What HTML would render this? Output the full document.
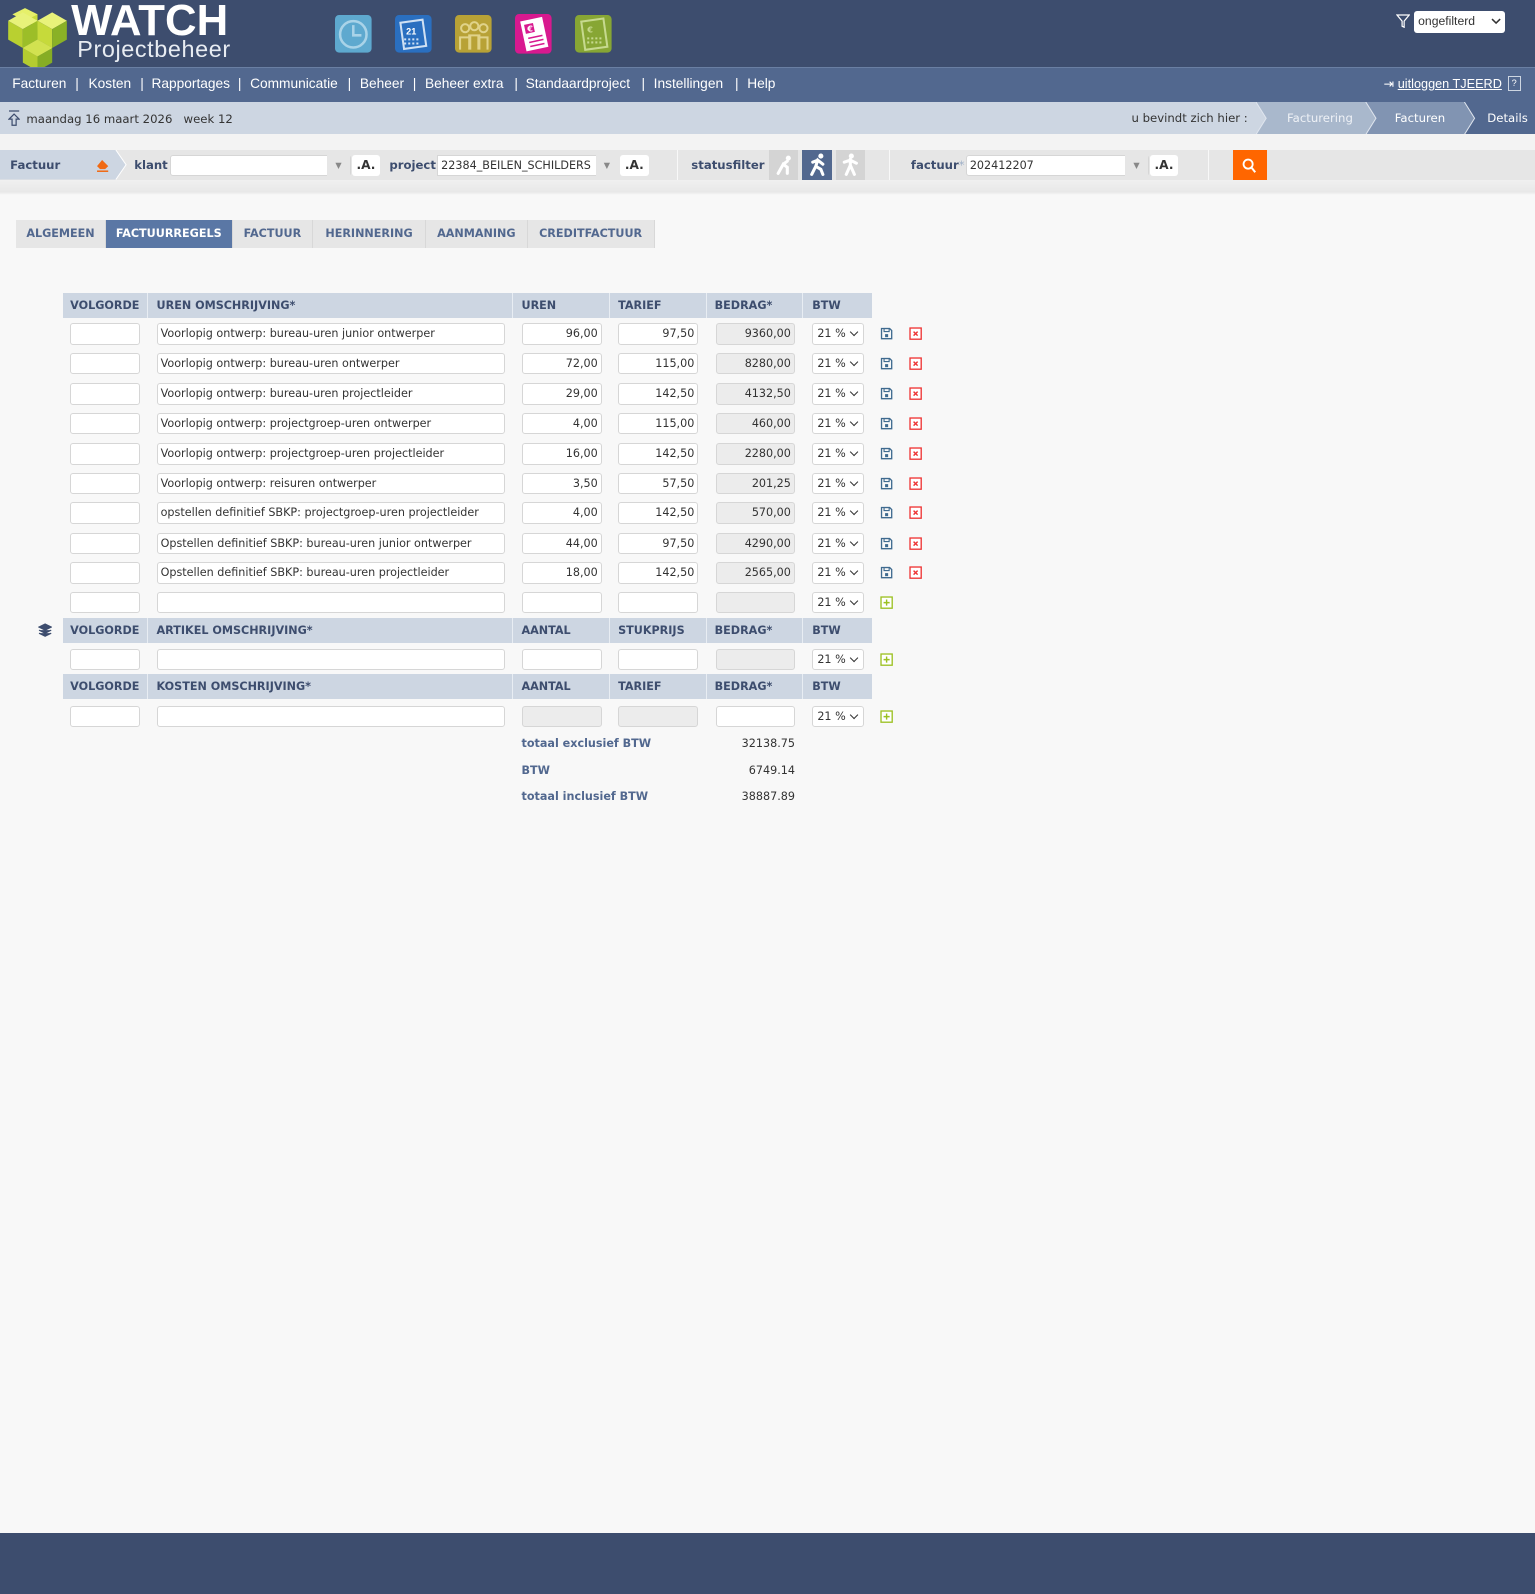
<!DOCTYPE html>
<html><head><meta charset="utf-8">
<style>
html,body{margin:0;padding:0}
body{zoom:1.0166;width:1510px;height:1568px;background:#f8f8f8;font-family:"DejaVu Sans","Liberation Sans",sans-serif;font-size:11px;color:#333;position:relative;overflow:hidden}
.a{position:absolute}
#top{left:0;top:0;width:1510px;height:66px;background:#3d4d6e}
#nav{left:0;top:66px;width:1510px;height:34px;background:#52688f;border-top:1px solid #6a7fa3;box-sizing:border-box}
#nav span{position:absolute;top:8px;color:#fff;font-family:"Liberation Sans",sans-serif;font-size:13.5px}
#bc{left:0;top:100px;width:1510px;height:32px;background:#cdd6e2}
#fb{left:0;top:148px;width:1510px;height:29px;background:#e6e6e6}
.inp{position:absolute;background:#fff;border:1px solid #d6d6d6;border-radius:3px;box-sizing:border-box;height:21px;font-size:11px;line-height:19px;padding:0 3px;white-space:nowrap;overflow:hidden}
.g{background:#ececec}
.r{text-align:right}
.th{position:absolute;height:25px;background:#cdd6e2;font-weight:bold;color:#3d4d6e;font-size:11px;line-height:25px}
.th span{position:absolute;top:0}
.th i{position:absolute;top:0;width:1px;height:25px;background:#e8edf3}
.sel{position:absolute;width:51px;height:21px;background:#fff;border:1px solid #d6d6d6;border-radius:3px;box-sizing:border-box;font-size:11px;line-height:19px;padding-left:4px}
.sel:after{content:"";position:absolute;right:6px;top:5px;width:5px;height:5px;border-right:1.5px solid #333;border-bottom:1.5px solid #333;transform:rotate(45deg)}
.tab{position:absolute;top:216px;height:28px;line-height:28px;background:#e6e6e6;color:#52688f;font-weight:bold;font-size:11px;text-align:center;border-right:1px solid #d8d8d8;box-sizing:border-box}
.lbl{position:absolute;font-weight:bold;color:#3d4d6e;font-size:11.5px}
.tot{position:absolute;font-weight:bold;color:#52688f;font-size:11px}
</style></head><body>
<div id="top" class="a"></div>
<svg class="a" style="left:4px;top:6px" width="68" height="64" viewBox="0 0 66 62">
<polygon points="20,2 32,8 32,20 20,14" fill="#c8dc3c"/><polygon points="20,2 8,8 20,14 32,8" fill="#e6f06a"/>
<polygon points="4,14 18,22 18,40 4,32" fill="#b9d030"/><polygon points="4,14 18,6 32,14 18,22" fill="#e8f27a"/>
<polygon points="18,22 32,14 32,32 18,40" fill="#9cbe28"/>
<polygon points="32,14 46,6 60,14 46,22" fill="#e8f27a"/><polygon points="32,14 46,22 46,40 32,32" fill="#c6da3a"/><polygon points="46,22 60,14 60,32 46,40" fill="#8ab126"/>
<polygon points="18,40 32,32 46,40 32,48" fill="#dde86a"/><polygon points="18,40 32,48 32,62 18,54" fill="#b4cc30"/><polygon points="32,48 46,40 46,54 32,62" fill="#86ad24"/>
<polygon points="32,32 46,40 32,48 18,40" fill="#d2e250"/>
</svg>
<div class="a" style="left:70px;top:-4px;color:#fff;font-weight:bold;font-size:43px;font-family:'Liberation Sans',sans-serif">WATCH</div>
<div class="a" style="left:76px;top:35px;color:#e8ecf2;font-size:23px;letter-spacing:0.6px;font-family:'Liberation Sans',sans-serif">Projectbeheer</div>
<svg class="a" style="left:330px;top:15px" width="36" height="37"><rect width="36" height="37" rx="4" fill="#5ea9cf"/><circle cx="18" cy="19" r="13" fill="none" stroke="#a9d3e8" stroke-width="2.5"/><path d="M18 10v10h8" fill="none" stroke="#a9d3e8" stroke-width="2.5"/></svg>
<svg class="a" style="left:389px;top:15px" width="36" height="37"><rect width="36" height="37" rx="4" fill="#2a6fc0"/><rect x="7" y="6" width="22" height="26" fill="none" stroke="#cfe0f3" stroke-width="2" transform="rotate(-8 18 19)"/><text x="11" y="19" font-size="9" fill="#fff" font-family="Liberation Sans" font-weight="bold">21</text><path d="M9 24h16M9 28h16" stroke="#cfe0f3" stroke-width="2" stroke-dasharray="2 2"/></svg>
<svg class="a" style="left:448px;top:15px" width="36" height="37"><rect width="36" height="37" rx="4" fill="#b8a236"/><circle cx="10" cy="13" r="4" fill="none" stroke="#e0d38a" stroke-width="2"/><circle cx="19" cy="11" r="4" fill="none" stroke="#e0d38a" stroke-width="2"/><circle cx="28" cy="13" r="4" fill="none" stroke="#e0d38a" stroke-width="2"/><path d="M5 34v-12h10v12M14 34v-14h10v14M23 34v-12h9v12" fill="none" stroke="#e0d38a" stroke-width="2"/></svg>
<svg class="a" style="left:507px;top:14px" width="36" height="39"><rect width="36" height="39" rx="4" fill="#d8198f"/><rect x="8" y="5" width="22" height="30" fill="#fff" transform="rotate(-12 18 20)"/><rect x="11" y="9" width="9" height="9" fill="#d8198f" transform="rotate(-12 18 20)"/><text x="12" y="17" font-size="8" fill="#fff" font-weight="bold">€</text><path d="M13 24l14-3M14 28l14-3M15 32l14-3" stroke="#d8198f" stroke-width="1.5"/></svg>
<svg class="a" style="left:566px;top:15px" width="36" height="37"><rect width="36" height="37" rx="4" fill="#87a634"/><rect x="8" y="5" width="22" height="28" fill="none" stroke="#c6d98e" stroke-width="2" transform="rotate(-8 18 19)"/><text x="12" y="17" font-size="8" fill="#c6d98e" font-weight="bold">€</text><path d="M12 23h14M12 27h14" stroke="#c6d98e" stroke-width="2" stroke-dasharray="2 2"/></svg>
<svg class="a" style="left:1373px;top:14px" width="14" height="14"><path d="M1 1h12l-5 6v6l-2-1v-5z" fill="none" stroke="#fff" stroke-width="1.2"/></svg>
<div class="a" style="left:1391px;top:11px;width:89px;height:21px;background:#fff;border-radius:3px;font-size:12px;line-height:21px;padding-left:4px;box-sizing:border-box;font-family:'Liberation Sans',sans-serif">ongefilterd</div>
<svg class="a" style="left:1467px;top:17px" width="10" height="8"><path d="M1 2l4 4 4-4" fill="none" stroke="#333" stroke-width="1.5"/></svg>

<div id="nav" class="a">
<span style="left:12px">Facturen</span><span style="left:74px">|</span><span style="left:87px">Kosten</span><span style="left:138px">|</span><span style="left:149px">Rapportages</span><span style="left:234px">|</span><span style="left:246px">Communicatie</span><span style="left:342px">|</span><span style="left:354px">Beheer</span><span style="left:406px">|</span><span style="left:418px">Beheer extra</span><span style="left:506px">|</span><span style="left:517px">Standaardproject</span><span style="left:631px">|</span><span style="left:643px">Instellingen</span><span style="left:723px">|</span><span style="left:735px">Help</span>
<span style="left:1361px;font-size:12.5px;top:8px">⇥ <u>uitloggen TJEERD</u></span>
<span style="left:1483px;top:8px;width:11px;height:13px;border:1px solid #cdd6e2;font-size:9px;text-align:center;line-height:13px">?</span>
</div>

<div id="bc" class="a">
<svg class="a" style="left:8px;top:8px" width="12" height="16"><path d="M1 1h10M6 4l-5 5h3v6h4v-6h3z" fill="none" stroke="#3d4d6e" stroke-width="1.2"/></svg>
<div class="a" style="left:26px;top:10px;font-size:11.5px;color:#333">maandag 16 maart 2026 &nbsp;&nbsp;week 12</div>
<div class="a" style="left:1113px;top:9px;font-size:11.5px;color:#333">u bevindt zich hier :</div>
<svg class="a" style="left:1235px;top:0" width="275" height="32">
<polygon points="0,0 108,0 118,16 108,32 0,32 10,16" fill="#a9b8cc"/>
<polygon points="108,0 205,0 215,16 205,32 108,32 118,16" fill="#8194b2"/>
<polygon points="205,0 275,0 275,32 205,32 215,16" fill="#52688f"/>
<path d="M0 0l10 16-10 16M108 0l10 16-10 16M205 0l10 16-10 16" fill="none" stroke="#dfe5ee" stroke-width="1"/>
</svg>
<div class="a" style="left:1266px;top:9px;color:#eef1f6;font-size:11.5px">Facturering</div>
<div class="a" style="left:1372px;top:9px;color:#fff;font-size:11.5px">Facturen</div>
<div class="a" style="left:1463px;top:9px;color:#fff;font-size:11.5px">Details</div>
</div>
<div class="a" style="left:0;top:132px;width:1510px;height:16px;background:#f3f3f3"></div>
<div id="fb" class="a">
<svg class="a" style="left:0;top:0" width="125" height="29"><polygon points="0,0 114,0 124,14.5 114,29 0,29" fill="#cdd6e2"/><path d="M114 0l10 14.5-10 14.5" fill="none" stroke="#fff"/></svg>
<div class="lbl" style="left:10px;top:7px">Factuur</div>
<svg class="a" style="left:93px;top:7px" width="15" height="14"><path d="M2 8l5-6 6 6-3 3H5z" fill="#f06a14"/><path d="M2 13h11" stroke="#f06a14" stroke-width="1.5"/></svg>
<div class="lbl" style="left:132px;top:7px">klant</div>
<div class="inp" style="left:167px;top:4px;width:178px"></div>
<div class="a" style="left:322px;top:4px;width:22px;height:21px;background:#e6e6e6;color:#888;text-align:center;font-size:8px;line-height:21px">▼</div>
<div class="a" style="left:346px;top:4px;width:28px;height:21px;background:#fff;border-radius:3px;font-weight:bold;font-size:12px;text-align:center;line-height:21px">.A.</div>
<div class="lbl" style="left:383px;top:7px">project</div>
<div class="inp" style="left:430px;top:4px;width:178px;border-radius:0">22384_BEILEN_SCHILDERS</div>
<div class="a" style="left:586px;top:4px;width:22px;height:21px;background:#e6e6e6;color:#888;text-align:center;font-size:8px;line-height:21px">▼</div>
<div class="a" style="left:610px;top:4px;width:28px;height:21px;background:#fff;border-radius:3px;font-weight:bold;font-size:12px;text-align:center;line-height:21px">.A.</div>
<div class="a" style="left:666px;top:0;width:1px;height:29px;background:#f8f8f8"></div>
<div class="lbl" style="left:680px;top:7px">statusfilter</div>
<div class="a" style="left:756px;top:0;width:29px;height:29px;background:#d4d4d4"></div>
<div class="a" style="left:789px;top:0;width:29px;height:29px;background:#52688f"></div>
<div class="a" style="left:822px;top:0;width:29px;height:29px;background:#d4d4d4"></div>
<svg class="a" style="left:756px;top:0" width="96" height="29"><g fill="none" stroke="#fff" stroke-width="3" stroke-linecap="round"><path d="M9 23l5-9 4 3v6M14 14l4-3"/><path d="M42 24l4-8 5 3 2 5M46 16l2-6 5 4M48 10l-5 2"/><path d="M76 24l4-9 4 9M80 15v-6M74 12l6-2 6 3"/></g><g fill="#fff"><circle cx="19" cy="8" r="2.5"/><circle cx="51" cy="6" r="2.5"/><circle cx="81" cy="6" r="2.5"/></g></svg>
<div class="a" style="left:874px;top:0;width:1px;height:29px;background:#f8f8f8"></div>
<div class="lbl" style="left:896px;top:7px">factuur<span style="color:#9fb0c8;font-weight:normal">*</span></div>
<div class="inp" style="left:950px;top:4px;width:180px">202412207</div>
<div class="a" style="left:1107px;top:4px;width:22px;height:21px;background:#e6e6e6;color:#888;text-align:center;font-size:8px;line-height:21px">▼</div>
<div class="a" style="left:1131px;top:4px;width:28px;height:21px;background:#fff;border-radius:3px;font-weight:bold;font-size:12px;text-align:center;line-height:21px">.A.</div>
<div class="a" style="left:1188px;top:0;width:1px;height:29px;background:#f8f8f8"></div>
<div class="a" style="left:1213px;top:0;width:33px;height:29px;background:#ff6600"></div>
<svg class="a" style="left:1221px;top:7px" width="16" height="16"><circle cx="7" cy="6" r="4.5" fill="none" stroke="#fff" stroke-width="1.8"/><path d="M10 9l4 5" stroke="#fff" stroke-width="2"/></svg>
</div>
<div class="a" style="left:0;top:177px;width:1510px;height:15px;background:linear-gradient(#f0f0f0,#e8e8e8 80%,#f8f8f8)"></div>

<div class="tab" style="left:16px;width:88px">ALGEMEEN</div>
<div class="tab" style="left:104px;width:125px;background:#5a77a5;color:#fff">FACTUURREGELS</div>
<div class="tab" style="left:229px;width:79px">FACTUUR</div>
<div class="tab" style="left:308px;width:111px">HERINNERING</div>
<div class="tab" style="left:419px;width:100px">AANMANING</div>
<div class="tab" style="left:519px;width:125px">CREDITFACTUUR</div>

<div id="tbl"></div>
<script>
var H='';
function hdr(y,a,b,c){H+='<div class="th" style="left:62px;top:'+y+'px;width:796px"><span style="left:7px">VOLGORDE</span><i style="left:83px"></i><span style="left:92px">'+a+'</span><i style="left:442px"></i><span style="left:451px">'+b+'</span><i style="left:537px"></i><span style="left:546px">'+c+'</span><i style="left:632px"></i><span style="left:641px">BEDRAG*</span><i style="left:727px"></i><span style="left:737px">BTW</span></div>';}
var save='<svg width="13" height="13"><path d="M1.5 1.5h8l2 2v8h-10z" fill="none" stroke="#3f6a8f" stroke-width="1.3"/><rect x="4" y="1.5" width="5" height="3" fill="none" stroke="#3f6a8f" stroke-width="1.1"/><rect x="5" y="7" width="3" height="3" fill="#3f6a8f"/></svg>';
var del='<svg width="13" height="13"><rect x="1" y="1" width="11" height="11" fill="#fff" stroke="#e33" stroke-width="1.3"/><path d="M4.5 4.5l4 4M8.5 4.5l-4 4" stroke="#e33" stroke-width="1.4"/></svg>';
var add='<svg width="13" height="13"><rect x="1" y="1" width="11" height="11" fill="#fff" stroke="#9bc020" stroke-width="1.3"/><path d="M6.5 3.5v6M3.5 6.5h6" stroke="#9bc020" stroke-width="1.4"/></svg>';
function row(y,d,u,t,b,gu,gb,icons){
H+='<div class="inp" style="left:69px;top:'+y+'px;width:69px"></div>';
H+='<div class="inp" style="left:154px;top:'+y+'px;width:343px">'+d+'</div>';
H+='<div class="inp r'+(gu?' g':'')+'" style="left:513px;top:'+y+'px;width:79px">'+u+'</div>';
H+='<div class="inp r'+(gu?' g':'')+'" style="left:608px;top:'+y+'px;width:79px">'+t+'</div>';
H+='<div class="inp r'+(gb?' g':'')+'" style="left:704px;top:'+y+'px;width:78px">'+b+'</div>';
H+='<div class="sel" style="left:799px;top:'+y+'px">21 %</div>';
if(icons){H+='<div class="a" style="left:866px;top:'+(y+4)+'px">'+save+'</div><div class="a" style="left:894px;top:'+(y+4)+'px">'+del+'</div>';}
else H+='<div class="a" style="left:866px;top:'+(y+4)+'px">'+add+'</div>';
}
hdr(288,'UREN OMSCHRIJVING*','UREN','TARIEF');
var rows=[["Voorlopig ontwerp: bureau-uren junior ontwerper","96,00","97,50","9360,00"],
["Voorlopig ontwerp: bureau-uren ontwerper","72,00","115,00","8280,00"],
["Voorlopig ontwerp: bureau-uren projectleider","29,00","142,50","4132,50"],
["Voorlopig ontwerp: projectgroep-uren ontwerper","4,00","115,00","460,00"],
["Voorlopig ontwerp: projectgroep-uren projectleider","16,00","142,50","2280,00"],
["Voorlopig ontwerp: reisuren ontwerper","3,50","57,50","201,25"],
["opstellen definitief SBKP: projectgroep-uren projectleider","4,00","142,50","570,00"],
["Opstellen definitief SBKP: bureau-uren junior ontwerper","44,00","97,50","4290,00"],
["Opstellen definitief SBKP: bureau-uren projectleider","18,00","142,50","2565,00"]];
var ys=[318,347,377,406,436,465,494,524,553];
for(var i=0;i<9;i++)row(ys[i],rows[i][0],rows[i][1],rows[i][2],rows[i][3],false,true,true);
row(582,'','','','',false,true,false);
hdr(608,'ARTIKEL OMSCHRIJVING*','AANTAL','STUKPRIJS');
row(638,'','','','',false,true,false);
hdr(663,'KOSTEN OMSCHRIJVING*','AANTAL','TARIEF');
row(694,'','','','',true,false,false);
H+='<svg class="a" style="left:37px;top:613px" width="14" height="15"><path d="M7 1l6 3-6 3-6-3z M1 7l6 3 6-3 M1 10l6 3 6-3" fill="#3d4d6e" stroke="#3d4d6e" stroke-width="1.2"/></svg>';
H+='<div class="tot" style="left:513px;top:725px">totaal exclusief BTW</div><div class="a" style="left:700px;top:725px;width:82px;text-align:right">32138.75</div>';
H+='<div class="tot" style="left:513px;top:752px">BTW</div><div class="a" style="left:700px;top:752px;width:82px;text-align:right">6749.14</div>';
H+='<div class="tot" style="left:513px;top:777px">totaal inclusief BTW</div><div class="a" style="left:700px;top:777px;width:82px;text-align:right">38887.89</div>';
document.getElementById('tbl').outerHTML=H;
</script>
<div class="a" style="left:0;top:1508px;width:1510px;height:60px;background:#3d4d6e"></div>
</body></html>
